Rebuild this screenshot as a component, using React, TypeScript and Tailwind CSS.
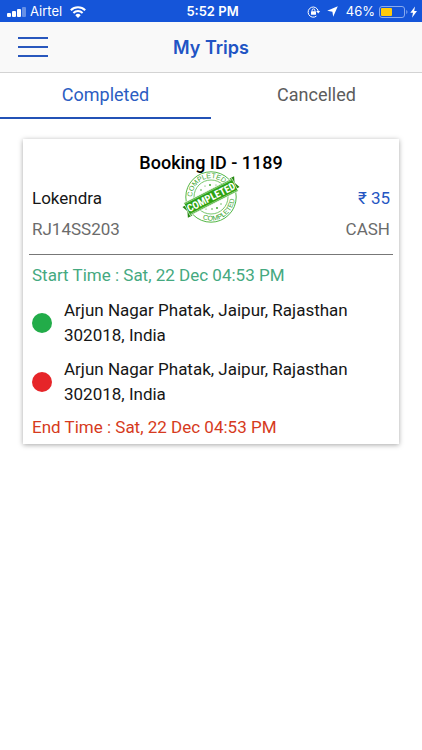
import { useState } from "react";
import clsx from "clsx";

interface Trip {
  id: number;
  driver: string;
  vehicle: string;
  fare: number;
  payment: string;
  startTime: string;
  endTime: string;
  pickup: string;
  dropoff: string;
}

const trips: Trip[] = [
  {
    id: 1189,
    driver: "Lokendra",
    vehicle: "RJ14SS203",
    fare: 35,
    payment: "CASH",
    startTime: "Sat, 22 Dec 04:53 PM",
    endTime: "Sat, 22 Dec 04:53 PM",
    pickup: "Arjun Nagar Phatak, Jaipur, Rajasthan 302018, India",
    dropoff: "Arjun Nagar Phatak, Jaipur, Rajasthan 302018, India",
  },
];

const tabs = ["Completed", "Cancelled"];

function StatusBar() {
  return (
    <div className="grid h-[22px] grid-cols-[1fr_auto_1fr] items-center bg-[#1555d9] pt-px pr-1 pl-[7px] font-['Inter',sans-serif] text-[13px] text-white">
      <div className="flex items-center gap-1">
        <svg width="19" height="10" viewBox="0 0 19 10" fill="currentColor" aria-hidden="true">
          <rect x="0" y="6" width="4" height="4" rx="1" />
          <rect x="5" y="4" width="4" height="6" rx="1" />
          <rect x="10" y="2" width="4" height="8" rx="1" />
          <rect x="15" y="0" width="4" height="10" rx="1" opacity="0.35" />
        </svg>
        <span>Airtel</span>
        <svg className="ml-1" width="16" height="12" viewBox="0 0 16 12" fill="none" stroke="currentColor" strokeWidth="2" aria-hidden="true">
          <path d="M.8 4.3a10.2 10.2 0 0 1 14.4 0" />
          <path d="M3.4 7a6.5 6.5 0 0 1 9.2 0" />
          <path d="M8 12 5.3 9.2a3.8 3.8 0 0 1 5.4 0z" fill="currentColor" stroke="none" />
        </svg>
      </div>
      <span className="font-semibold">5:52 PM</span>
      <div className="flex items-center justify-end">
        <svg className="mr-[6px]" width="14" height="12" viewBox="0 0 14 12" fill="none" stroke="currentColor" aria-hidden="true">
          <path d="M9.4 10.1A5.1 5.1 0 1 1 11.2 5" />
          <path d="M9.2 5h4l-2 2.6z" fill="currentColor" stroke="none" />
          <rect x="4" y="5.3" width="5" height="3.5" rx=".5" fill="currentColor" stroke="none" />
          <path d="M5.1 5.5V4.3a1.4 1.4 0 0 1 2.8 0v1.2" />
        </svg>
        <svg className="mr-2" width="11" height="11" viewBox="0 0 11 11" fill="currentColor" aria-hidden="true">
          <path d="M10.8.2 6.2 10.8 5.4 5.7.2 4.8z" />
        </svg>
        <span>46%</span>
        <svg className="ml-1" width="39" height="12" viewBox="0 0 39 12" aria-hidden="true">
          <rect x=".5" y=".5" width="25" height="11" rx="2.5" fill="none" stroke="#8aabee" />
          <rect x="2" y="2" width="11" height="8" rx="1" fill="#ffcb0a" />
          <path d="M27.3 4v4c1.5-.5 1.5-3.5 0-4z" fill="#8aabee" />
          <path d="m36 .4-4.7 6.3h2.7l-1 5 5-6.7h-2.8z" fill="currentColor" />
        </svg>
      </div>
    </div>
  );
}

function CompletedStamp() {
  return (
    <svg
      className="absolute top-8 left-1/2 -translate-x-1/2"
      width="60"
      height="52"
      viewBox="-30 -26 60 52"
      role="img"
      aria-label="Completed"
    >
      <defs>
        <path id="stamp-top" d="M-18.8 0a18.8 18.8 0 0 1 37.6 0" />
        <path id="stamp-bottom" d="M-23.6 0a23.6 23.6 0 0 0 47.2 0" />
      </defs>
      <g fill="none" stroke="#55b747">
        <circle r="25.2" strokeWidth="1" />
        <circle r="17" strokeWidth=".8" />
      </g>
      <g fill="#43ad35">
        <circle cx="-10" cy="-7" r=".8" />
        <circle cx="-6" cy="-11" r=".6" />
        <circle cx="-1" cy="-12" r="1" />
        <circle cx="5" cy="-12" r=".6" />
        <circle cx="-5" cy="12" r=".6" />
        <circle cx="1" cy="12" r=".8" />
        <circle cx="6" cy="11" r="1" />
        <circle cx="10" cy="7" r=".7" />
      </g>
      <g fill="#3aa52c" fontFamily="Liberation Sans, sans-serif" fontSize="7" fontWeight="400">
        <g transform="rotate(-23)">
          <text textAnchor="middle">
            <textPath href="#stamp-top" startOffset="50%">COMPLETED</textPath>
          </text>
        </g>
        <g transform="rotate(-32)">
          <text textAnchor="middle">
            <textPath href="#stamp-bottom" startOffset="50%">COMPLETED</textPath>
          </text>
        </g>
      </g>
      <g transform="rotate(-27)">
        <path d="M-30-4h5V8h-5l2.5-6zM30-8h-5V4h5l-2.5-6z" fill="#24870f" />
        <rect x="-27" y="-7" width="54" height="14" fill="#2da313" stroke="#fff" strokeWidth=".6" />
        <path d="M-26-5.8h52M-26 5.8h52" stroke="#fff" strokeWidth=".4" />
        <text
          y="3.8"
          textAnchor="middle"
          fill="#fff"
          fontFamily="Roboto Condensed, Open Sans Condensed, Roboto, sans-serif"
          fontSize="10.4"
          fontWeight="700"
        >
          COMPLETED
        </text>
      </g>
    </svg>
  );
}

function Stop({ address, kind }: { address: string; kind: "pickup" | "dropoff" }) {
  return (
    <li className="flex items-center gap-3">
      <span
        className={clsx("size-5 shrink-0 rounded-full", kind === "pickup" ? "bg-[#22ac49]" : "bg-[#e62529]")}
      />
      <p className="max-w-[300px] leading-[25px]">{address}</p>
    </li>
  );
}

function TripCard({ trip }: { trip: Trip }) {
  return (
    <article className="relative bg-white pt-3 pb-[5px] text-[17px] leading-6 text-[#161616] shadow-[0_1px_5px_rgba(0,0,0,0.35)]">
      <h2 className="text-center text-lg leading-6 font-medium text-black">Booking ID - {trip.id}</h2>
      <CompletedStamp />
      <div className="mt-[11px] flex justify-between px-[9px]">
        <span>{trip.driver}</span>
        <span className="text-[#2456c2]">₹ {trip.fare}</span>
      </div>
      <div className="mt-[7px] flex justify-between px-[9px] text-[#6b6b6b]">
        <span>{trip.vehicle}</span>
        <span>{trip.payment}</span>
      </div>
      <hr className="mx-[6px] mt-[13px] border-[#777777]" />
      <div className="px-[9px] pt-2">
        <p className="text-[#45a980]">Start Time : {trip.startTime}</p>
        <ul className="mt-[11px] mb-2 flex flex-col gap-[9px]">
          <Stop address={trip.pickup} kind="pickup" />
          <Stop address={trip.dropoff} kind="dropoff" />
        </ul>
        <p className="text-[#d63a20]">End Time : {trip.endTime}</p>
      </div>
    </article>
  );
}

export default function App() {
  const [activeTab, setActiveTab] = useState("Completed");

  return (
    <div className="min-h-screen bg-white font-['Roboto',sans-serif]">
      <StatusBar />

      <header className="grid h-[51px] grid-cols-[1fr_auto_1fr] items-center border-b border-[#d3d3d3] bg-[#f9f9f9] px-[18px]">
        <button type="button" aria-label="Open menu" className="flex w-[30px] flex-col gap-[7px]">
          <span className="h-[2px] w-full bg-[#2857bd]" />
          <span className="h-[2px] w-full bg-[#2857bd]" />
          <span className="h-[2px] w-full bg-[#2857bd]" />
        </button>
        <h1 className="pt-px font-['Inter',sans-serif] text-lg font-semibold text-[#2154c4]">My Trips</h1>
      </header>

      {/* Tabs */}
      <div role="tablist" className="grid grid-cols-2">
        {tabs.map((tab) => (
          <button
            key={tab}
            type="button"
            role="tab"
            aria-selected={activeTab === tab}
            onClick={() => setActiveTab(tab)}
            className={clsx(
              "h-[46px] border-b-2 text-lg",
              activeTab === tab ? "border-[#2352b6] text-[#2b5dc2]" : "border-transparent text-[#5c5c5c]"
            )}
          >
            {tab}
          </button>
        ))}
      </div>

      <main className="flex flex-col gap-5 px-[23px] py-5">
        {activeTab === "Completed" && trips.map((trip) => <TripCard key={trip.id} trip={trip} />)}
      </main>
    </div>
  );
}
